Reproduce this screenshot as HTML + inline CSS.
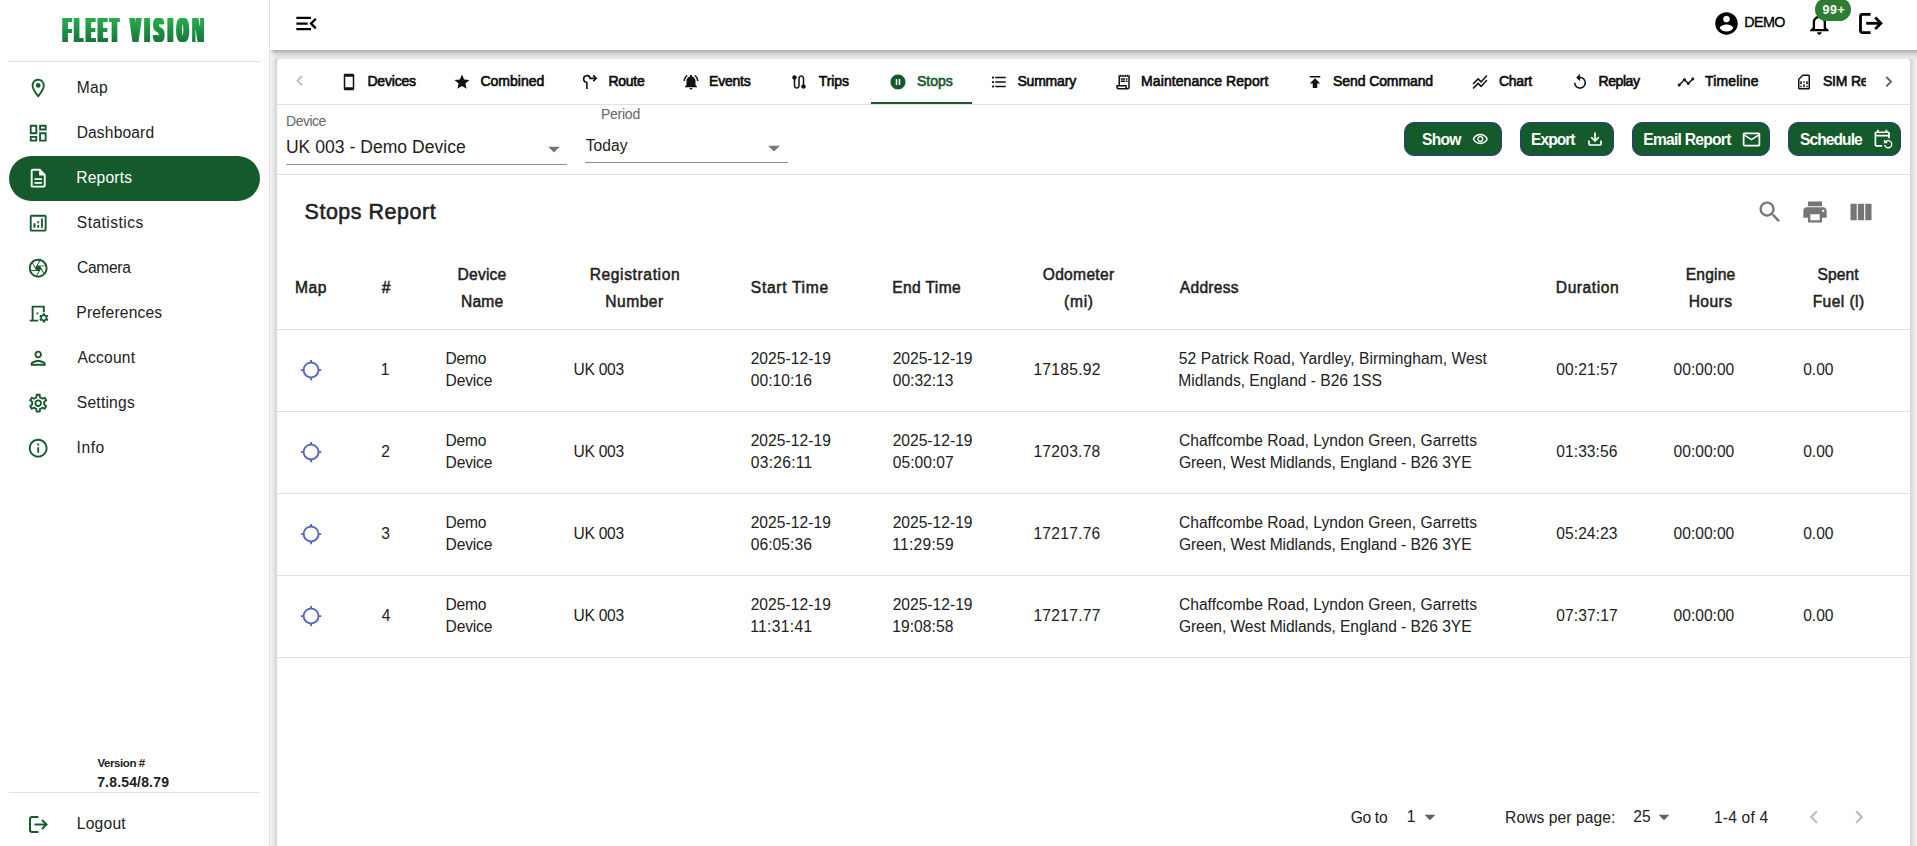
<!DOCTYPE html>
<html lang="en">
<head>
<meta charset="utf-8">
<title>Fleet Vision - Stops Report</title>
<style>
*{box-sizing:border-box;margin:0;padding:0}
html,body{width:1917px;height:846px;overflow:hidden;background:#fff;font-family:"Liberation Sans",sans-serif;color:#212121}
div,span,svg{position:absolute}
svg{display:block;fill:currentColor;overflow:visible}
.t{white-space:pre;line-height:30px}
#side{left:0;top:0;width:270px;height:846px;background:#fff;border-right:1px solid #e0e0e0}
.hr{left:9px;width:251px;height:1px;background:#e0e0e0}
.mi{left:9px;width:251px;height:45px;border-radius:22.5px}
.mi svg{color:#155a2b}
.mi.act{background:#155a2b}
.mi.act svg{color:#fff}
#main{left:270px;top:0;width:1647px;height:846px;background:#fff;overflow:hidden}
#hdr{left:0;top:0;width:1647px;height:50px;background:#fff}
#hdr svg{color:#000}
#gapt{left:0;top:50px;width:1647px;height:9px;background:linear-gradient(to bottom,rgba(0,0,0,.31) .5px,rgba(0,0,0,.255) 1.5px,rgba(0,0,0,.216) 2.5px,rgba(0,0,0,.176) 3.5px,rgba(0,0,0,.145) 4.5px,rgba(0,0,0,.122) 5.5px,rgba(0,0,0,.106) 6.5px,rgba(0,0,0,.098) 7.5px,rgba(0,0,0,.09) 8.5px)}
#gapl{left:0;top:59px;width:7px;height:787px;background:linear-gradient(to right,rgba(0,0,0,.047) .5px,rgba(0,0,0,.063) 1.5px,rgba(0,0,0,.078) 2.5px,rgba(0,0,0,.098) 3.5px,rgba(0,0,0,.114) 4.5px,rgba(0,0,0,.137) 5.5px,rgba(0,0,0,.169) 6.5px)}
#gapr{left:1640px;top:59px;width:7px;height:787px;background:linear-gradient(to left,rgba(0,0,0,.047) .5px,rgba(0,0,0,.063) 1.5px,rgba(0,0,0,.078) 2.5px,rgba(0,0,0,.098) 3.5px,rgba(0,0,0,.114) 4.5px,rgba(0,0,0,.137) 5.5px,rgba(0,0,0,.169) 6.5px)}
#gapc{left:0;top:50px;width:6px;height:9px;background:linear-gradient(to right,rgba(255,255,255,.75) 0,rgba(255,255,255,.45) 2px,rgba(255,255,255,0) 6px)}
#gapk{left:7px;top:59px;width:1633px;height:5px;background:linear-gradient(to right,#dedede 0,#dedede 5px,#fff 5px,#fff 1628px,#dedede 1628px)}
#card{left:7px;top:59px;width:1633px;height:800px;background:#fff;border-radius:4px 4px 0 0}
.ln{left:0;width:1633px;height:1px;background:#e0e0e0}
.tab{top:0;height:44px}
#tabs{left:40px;top:0;width:1548.500px;height:45px;overflow:hidden}
.btn{top:63px;height:34px;border-radius:10px;background:#155a2b;border:1px solid #2a3a8c}
.btn svg{color:#fff}
.row{left:0;width:1633px;height:82px;border-bottom:1px solid #e0e0e0}
#thead{left:0;top:189px;width:1633px;height:82px;border-bottom:1px solid #e0e0e0}
#pager{left:0;top:731px;width:1633px;height:56px}
</style>
</head>
<body>

<div id="side">
<div id="logo" style="left:0;top:0;width:269px;height:60px"><svg width="269" height="60" viewBox="0 0 269 60" style="display:block">
<defs><linearGradient id="lg" gradientUnits="userSpaceOnUse" x1="0" y1="16.0" x2="0" y2="41.9"><stop offset="0" stop-color="#2ab24c"/><stop offset="1" stop-color="#15763a"/></linearGradient>
<filter id="fat2" x="-5%" y="-20%" width="110%" height="140%">
<feOffset dx="-2.1" dy="-0.300" result="a"/><feOffset in="SourceGraphic" dx="-1.05" dy="0.300" result="b"/><feOffset in="SourceGraphic" dx="1.05" dy="-0.300" result="c"/><feOffset in="SourceGraphic" dx="2.1" dy="0.300" result="d"/>
<feMerge><feMergeNode in="a"/><feMergeNode in="b"/><feMergeNode in="SourceGraphic"/><feMergeNode in="c"/><feMergeNode in="d"/></feMerge></filter></defs>
<g filter="url(#fat2)"><text x="63.6" y="41.9" font-family="Liberation Sans, sans-serif" font-weight="bold" font-size="35.0" letter-spacing="14.0" fill="url(#lg)"><tspan textLength="58.9" lengthAdjust="spacingAndGlyphs">FLEET</tspan><tspan textLength="8.5" lengthAdjust="spacingAndGlyphs"> </tspan><tspan textLength="77.2" lengthAdjust="spacingAndGlyphs">VISION</tspan></text></g>
<path fill="#fff" d="M198.300,17H200.100V27.500ZM195.500,42.200H197.600L195.500,28Z"/></svg></div>
<div class="hr" style="top:61px"></div>
<div id="menu">
<div class="mi" style="top:66px"><svg class="i" style="left:18px;top:11px;width:22.4px;height:22.4px;" viewBox="0 0 24 24"><path d="M12 2C8.13 2 5 5.13 5 9c0 5.25 7 13 7 13s7-7.750 7-13c0-3.870-3.130-7-7-7zM7 9c0-2.760 2.240-5 5-5s5 2.240 5 5c0 2.880-2.880 7.190-5 9.880C9.920 16.210 7 11.850 7 9z"/><circle cx="12" cy="9" r="2.500"/></svg><span class="t" style="left:67.65px;top:7px;font-size:15.6px;letter-spacing:0.29px;">Map</span></div>
<div class="mi" style="top:111px"><svg class="i" style="left:18px;top:11px;width:22.4px;height:22.4px;" viewBox="0 0 24 24"><path d="M19 5v2h-4V5h4M9 5v6H5V5h4m10 8v6h-4v-6h4M9 17v2H5v-2h4M21 3h-8v6h8V3zM11 3H3v10h8V3zm10 8h-8v10h8V11zm-10 4H3v6h8v-6z"/></svg><span class="t" style="left:67.65px;top:7px;font-size:15.6px;letter-spacing:0.15px;">Dashboard</span></div>
<div class="mi act" style="top:156px"><svg class="i" style="left:18px;top:11px;width:22.4px;height:22.4px;" viewBox="0 0 24 24"><path d="M8 16h8v2H8zm0-4h8v2H8zm6-10H6c-1.100 0-2 .900-2 2v16c0 1.100.890 2 1.990 2H18c1.100 0 2-.900 2-2V8l-6-6zm4 18H6V4h7v5h5v11z"/></svg><span class="t" style="left:67.35px;top:7px;font-size:15.6px;letter-spacing:0.17px;color:#fff;">Reports</span></div>
<div class="mi" style="top:201px"><svg class="i" style="left:18px;top:11px;width:22.4px;height:22.4px;" viewBox="0 0 24 24"><path d="M19 3H5c-1.100 0-2 .900-2 2v14c0 1.100.900 2 2 2h14c1.100 0 2-.900 2-2V5c0-1.100-.900-2-2-2zm0 16H5V5h14v14z"/><path d="M7 12h2v5H7zm8-5h2v10h-2zm-4 7h2v3h-2zm0-4h2v2h-2z"/></svg><span class="t" style="left:67.87px;top:7px;font-size:15.6px;letter-spacing:0.44px;">Statistics</span></div>
<div class="mi" style="top:246px"><svg class="i" style="left:18px;top:11px;width:22.4px;height:22.4px;" viewBox="0 0 24 24"><path d="M14.250 2.260l-.080-.040-.010.020C13.460 2.090 12.740 2 12 2 6.480 2 2 6.480 2 12s4.480 10 10 10 10-4.480 10-10c0-4.750-3.310-8.720-7.750-9.740zM19.410 9h-7.990l2.710-4.700c2.400.660 4.350 2.420 5.280 4.700zM13.100 4.080L10.270 9l-1.150 2L6.400 6.300C7.840 4.880 9.820 4 12 4c.370 0 .740.030 1.100.080zM5.700 7.090L8.540 12l1.150 2H4.260C4.100 13.360 4 12.690 4 12c0-1.850.640-3.550 1.700-4.910zM4.590 15h7.980l-2.710 4.700c-2.400-.670-4.340-2.420-5.270-4.700zm6.310 4.910L14.890 13l2.720 4.700C16.160 19.120 14.180 20 12 20c-.380 0-.740-.040-1.100-.090zm7.400-3l-4-6.910h5.430c.170.640.270 1.310.270 2 0 1.850-.640 3.550-1.700 4.910z"/></svg><span class="t" style="left:67.91px;top:7px;font-size:15.6px;letter-spacing:-0.29px;">Camera</span></div>
<div class="mi" style="top:291px"><svg class="i" style="left:18px;top:11px;width:22.4px;height:22.4px;" viewBox="0 0 24 24"><path d="M21.690 16.370l1.140-1-1-1.730-1.450.490c-.320-.270-.680-.480-1.080-.630L19 12h-2l-.300 1.490c-.400.150-.760.360-1.080.630l-1.450-.490-1 1.730 1.140 1c-.080.500-.080.760 0 1.260l-1.140 1 1 1.730 1.450-.490c.320.270.680.480 1.080.630L17 22h2l.300-1.490c.400-.150.760-.360 1.080-.630l1.450.490 1-1.730-1.140-1c.080-.510.080-.770 0-1.270zM18 19c-1.100 0-2-.900-2-2s.900-2 2-2 2 .900 2 2-.900 2-2 2zM19 4v7h-2V6H7v13h5v2H3v-2h2V4h14zM12.200 13.200h-2v-2h2z"/></svg><span class="t" style="left:67.35px;top:7px;font-size:15.6px;letter-spacing:0.17px;">Preferences</span></div>
<div class="mi" style="top:336px"><svg class="i" style="left:18px;top:11px;width:22.4px;height:22.4px;" viewBox="0 0 24 24"><path d="M12 6c1.100 0 2 .900 2 2s-.900 2-2 2-2-.900-2-2 .900-2 2-2m0 10c2.700 0 5.800 1.290 6 2H6c.230-.720 3.310-2 6-2m0-12C9.790 4 8 5.790 8 8s1.790 4 4 4 4-1.790 4-4-1.790-4-4-4zm0 10c-2.670 0-8 1.340-8 4v2h16v-2c0-2.660-5.330-4-8-4z"/></svg><span class="t" style="left:68.41px;top:7px;font-size:15.6px;letter-spacing:0.22px;">Account</span></div>
<div class="mi" style="top:381px"><svg class="i" style="left:18px;top:11px;width:22.4px;height:22.4px;" viewBox="0 0 24 24"><path d="M19.430 12.980c.040-.320.070-.640.070-.980 0-.340-.030-.660-.070-.980l2.110-1.650c.190-.150.240-.420.120-.640l-2-3.460c-.090-.160-.260-.250-.440-.250-.060 0-.120.010-.170.030l-2.490 1c-.520-.400-1.080-.730-1.690-.980l-.380-2.650C14.460 2.180 14.250 2 14 2h-4c-.250 0-.460.180-.490.420l-.380 2.650c-.610.250-1.170.590-1.690.980l-2.490-1c-.060-.020-.120-.030-.180-.030-.170 0-.340.090-.430.250l-2 3.460c-.130.220-.070.490.120.640l2.110 1.650c-.040.320-.070.650-.070.980 0 .330.030.660.070.980l-2.110 1.650c-.190.150-.240.420-.120.640l2 3.460c.090.160.260.250.440.250.060 0 .120-.010.170-.030l2.490-1c.520.400 1.080.730 1.690.980l.380 2.650c.030.240.240.420.490.420h4c.250 0 .460-.180.490-.420l.380-2.650c.610-.250 1.170-.590 1.690-.980l2.490 1c.060.020.120.030.180.030.170 0 .340-.090.430-.250l2-3.460c.120-.220.070-.490-.120-.640l-2.110-1.650zm-1.980-1.710c.040.310.050.520.050.730 0 .210-.020.430-.050.730l-.140 1.130.890.700 1.080.840-.700 1.210-1.270-.510-1.040-.420-.900.680c-.430.320-.840.560-1.250.730l-1.060.430-.160 1.130-.200 1.350h-1.400l-.190-1.350-.160-1.130-1.060-.430c-.430-.180-.830-.410-1.230-.710l-.910-.700-1.060.430-1.270.510-.700-1.210 1.080-.840.890-.700-.140-1.130c-.030-.310-.050-.540-.050-.740s.020-.430.050-.730l.140-1.130-.890-.700-1.080-.840.700-1.210 1.270.510 1.040.420.900-.680c.430-.320.840-.560 1.250-.730l1.060-.430.160-1.130.200-1.350h1.390l.190 1.350.160 1.130 1.060.430c.430.180.830.410 1.230.710l.910.700 1.060-.430 1.270-.510.700 1.210-1.070.850-.890.700.140 1.130zM12 8c-2.210 0-4 1.790-4 4s1.790 4 4 4 4-1.790 4-4-1.790-4-4-4zm0 6c-1.100 0-2-.900-2-2s.900-2 2-2 2 .900 2 2-.900 2-2 2z"/></svg><span class="t" style="left:67.87px;top:7px;font-size:15.6px;letter-spacing:0.21px;">Settings</span></div>
<div class="mi" style="top:426px"><svg class="i" style="left:18px;top:11px;width:22.4px;height:22.4px;" viewBox="0 0 24 24"><path d="M11 7h2v2h-2zm0 4h2v6h-2zm1-9C6.480 2 2 6.480 2 12s4.480 10 10 10 10-4.480 10-10S17.520 2 12 2zm0 18c-4.410 0-8-3.590-8-8s3.590-8 8-8 8 3.590 8 8-3.590 8-8 8z"/></svg><span class="t" style="left:67.52px;top:7px;font-size:15.6px;letter-spacing:0.57px;">Info</span></div>
</div>
<span class="t" style="left:97.47px;top:748px;font-size:11.5px;letter-spacing:-0.43px;font-weight:bold;">Version #</span>
<span class="t" style="left:97.17px;top:767px;font-size:14px;letter-spacing:0.17px;font-weight:bold;">7.8.54/8.79</span>
<div class="hr" style="top:792px"></div>
<div class="mi" style="top:802px"><svg class="i" style="left:19.900px;top:13.700px;width:19px;height:17px" viewBox="0 0 19 17"><g fill="none" stroke="#155a2b" stroke-width="2"><path d="M9.400,1H3Q1,1 1,3V14Q1,16 3,16H9.400"/><path d="M5.600,8.500H17"/><path d="M13,4L17.500,8.500L13,13"/></g></svg><span class="t" style="left:67.75px;top:7px;font-size:15.6px;letter-spacing:0.25px;">Logout</span></div>
</div>
<div id="main">
<div id="gapt"></div><div id="gapl"></div><div id="gapr"></div><div id="gapc"></div><div id="gapk"></div>
<div id="hdr">
<svg class="i" style="left:22.7px;top:10.1px;width:27px;height:27px;" viewBox="0 0 24 24"><path d="M3 18h13v-2H3v2zm0-5h10v-2H3v2zm0-7v2h13V6H3zm18 9.590L17.420 12 21 8.410 19.590 7l-5 5 5 5L21 15.590z"/></svg>
<svg class="i" style="left:1443.1px;top:9.7px;width:27px;height:27px;" viewBox="0 0 24 24"><path d="M12 2C6.480 2 2 6.480 2 12s4.480 10 10 10 10-4.480 10-10S17.520 2 12 2zm0 3c1.660 0 3 1.340 3 3s-1.340 3-3 3-3-1.340-3-3 1.340-3 3-3zm0 14.200c-2.500 0-4.710-1.280-6-3.220.030-1.990 4-3.080 6-3.080 1.990 0 5.970 1.090 6 3.080-1.290 1.940-3.500 3.220-6 3.220z"/></svg>
<svg class="i" style="left:0;top:0;width:1647px;height:50px" viewBox="270 0 1647 50"><path fill-rule="evenodd" d="M1810.05,31.3V30.3L1812.7,27.5V22.3C1812.7,18.5 1815.75,15.7 1819.35,15.7C1822.95,15.7 1826,18.5 1826,22.3V27.5L1828.65,30.3V31.3ZM1815.05,29V22.3C1815.05,19.8 1816.95,18.1 1819.35,18.1C1821.75,18.1 1823.65,19.8 1823.65,22.3V29ZM1817.15,32.3H1821.55C1821.55,33.6 1820.55,34.8 1819.35,34.8C1818.15,34.8 1817.15,33.6 1817.15,32.3Z"/><g fill="none" stroke="#000" stroke-width="2.800"><path d="M1870.600,14.400H1862.500Q1860.500,14.400 1860.500,16.400V30.600Q1860.500,32.600 1862.500,32.600H1870.600"/><path d="M1866.200,23.300H1880"/><path d="M1875.200,17.600L1880.900,23.300L1875.200,29"/></g></svg>
<span class="t" style="left:1474.34px;top:7px;font-size:14.3px;letter-spacing:-0.62px;color:#000;-webkit-text-stroke:0.35px;">DEMO</span>
<div id="badge" style="left:1545.300px;top:-2px;width:36px;height:23px;border-radius:11.500px;background:#2e7d32"><span class="t" style="left:7.3px;top:-3px;font-size:12.4px;letter-spacing:0.61px;color:#fff;font-weight:bold;">99+</span></div>
</div>
<div id="card">
<svg class="i" style="left:11.7px;top:11.25px;width:21.4px;height:21.4px;color:#bdbdbd;" viewBox="0 0 24 24"><path d="M15.410 7.410L14 6l-6 6 6 6 1.410-1.410L10.830 12z"/></svg>
<svg class="i" style="left:1600.6px;top:11.55px;width:21.4px;height:21.4px;color:#5a5a5a;" viewBox="0 0 24 24"><path d="M10 6L8.590 7.410 13.170 12l-4.580 4.590L10 18l6-6z"/></svg>
<div id="tabs">
<div class="tab" style="left:4.9px;width:113.1px"><svg class="i" style="left:18px;top:13.75px;width:18px;height:18px;color:#111;" viewBox="0 0 24 24"><path d="M17 1.010L7 1c-1.100 0-1.990.900-1.990 2v18c0 1.100.890 2 1.990 2h10c1.100 0 2-.900 2-2V3c0-1.100-.900-1.990-2-1.990zM17 19H7V5h10v14z"/></svg><span class="t" style="left:45.52px;top:7px;font-size:14px;letter-spacing:-0.19px;color:#0a0a0a;-webkit-text-stroke:0.6px;">Devices</span></div>
<div class="tab" style="left:118px;width:128px"><svg class="i" style="left:18px;top:13.75px;width:18px;height:18px;color:#111;" viewBox="0 0 24 24"><path d="M12 17.270L18.180 21l-1.640-7.030L22 9.240l-7.190-.610L12 2 9.190 8.630 2 9.240l5.460 4.730L5.820 21z"/></svg><span class="t" style="left:45.43px;top:7px;font-size:14px;letter-spacing:0.02px;color:#0a0a0a;-webkit-text-stroke:0.6px;">Combined</span></div>
<div class="tab" style="left:245.7px;width:100.9px"><svg class="i" style="left:17.05px;top:12.06px;width:19.5px;height:19.5px;color:#111;" viewBox="0 0 24 24"><path fill="none" stroke="currentColor" stroke-width="2" d="M8.500 22v-8.200M8.500 13.800a4 4 0 1 1 3.900-4.800H19.500"/><path fill="none" stroke="currentColor" stroke-width="2" d="M16.300 5.400L19.900 9l-3.600 3.600"/></svg><span class="t" style="left:45.72px;top:7px;font-size:14px;letter-spacing:-0.27px;color:#0a0a0a;-webkit-text-stroke:0.6px;">Route</span></div>
<div class="tab" style="left:346.9px;width:105.8px"><svg class="i" style="left:18px;top:13.75px;width:18px;height:18px;color:#111;" viewBox="0 0 24 24"><path d="M7.580 4.080L6.150 2.650C3.750 4.480 2.170 7.300 2.030 10.500h2c.150-2.650 1.510-4.970 3.550-6.420zm12.390 6.420h2c-.150-3.200-1.730-6.020-4.120-7.850l-1.420 1.430c2.020 1.450 3.390 3.770 3.540 6.420zM18 11c0-3.070-1.640-5.640-4.500-6.320V4c0-.830-.670-1.500-1.500-1.500s-1.500.670-1.500 1.500v.680C7.630 5.360 6 7.920 6 11v5l-2 2v1h16v-1l-2-2v-5zm-6 11c.140 0 .270-.010.400-.040.650-.140 1.180-.580 1.440-1.180.100-.240.150-.500.150-.780h-4c.010 1.100.900 2 2.010 2z"/></svg><span class="t" style="left:45.22px;top:7px;font-size:14px;letter-spacing:-0.23px;color:#0a0a0a;-webkit-text-stroke:0.6px;">Events</span></div>
<div class="tab" style="left:455.1px;width:95.7px"><svg class="i" style="left:18px;top:13.75px;width:18px;height:18px;color:#111;" viewBox="0 0 24 24"><path d="M19 15.180V7c0-2.210-1.790-4-4-4s-4 1.790-4 4v10c0 1.100-.900 2-2 2s-2-.900-2-2V8.820C8.160 8.400 9 7.300 9 6c0-1.660-1.340-3-3-3S3 4.340 3 6c0 1.300.840 2.400 2 2.820V17c0 2.210 1.790 4 4 4s4-1.790 4-4V7c0-1.100.900-2 2-2s2 .900 2 2v8.180c-1.160.410-2 1.510-2 2.820 0 1.660 1.340 3 3 3s3-1.340 3-3c0-1.300-.840-2.400-2-2.820z"/></svg><span class="t" style="left:46.68px;top:7px;font-size:14px;letter-spacing:-0.12px;color:#0a0a0a;-webkit-text-stroke:0.6px;">Trips</span></div>
<div class="tab" style="left:554px;width:100.6px"><svg class="i" style="left:18px;top:13.75px;width:18px;height:18px;color:#155a2b;" viewBox="0 0 24 24"><path d="M12 2C6.480 2 2 6.480 2 12s4.480 10 10 10 10-4.480 10-10S17.520 2 12 2zm-1 14H9V8h2v8zm4 0h-2V8h2v8z"/></svg><span class="t" style="left:46.09px;top:7px;font-size:14px;letter-spacing:-0.05px;color:#155a2b;-webkit-text-stroke:0.6px;">Stops</span></div>
<div class="tab" style="left:655.2px;width:123.5px"><svg class="i" style="left:18px;top:13.75px;width:18px;height:18px;color:#111;" viewBox="0 0 24 24"><path d="M4 10.500c-.830 0-1.500.670-1.500 1.500s.670 1.500 1.500 1.500 1.500-.670 1.500-1.500-.670-1.500-1.500-1.500zm0-6c-.830 0-1.500.670-1.500 1.500S3.170 7.500 4 7.500 5.500 6.830 5.500 6 4.830 4.500 4 4.500zm0 12c-.830 0-1.500.680-1.500 1.500s.680 1.500 1.500 1.500 1.500-.680 1.500-1.500-.670-1.500-1.500-1.500zM7 19h14v-2H7v2zm0-6h14v-2H7v2zm0-8v2h14V5H7z"/></svg><span class="t" style="left:45.19px;top:7px;font-size:14px;letter-spacing:-0.18px;color:#0a0a0a;-webkit-text-stroke:0.6px;">Summary</span></div>
<div class="tab" style="left:779px;width:191.8px"><svg class="i" style="left:18px;top:13.75px;width:18px;height:18px;color:#111;" viewBox="0 0 24 24"><path d="M19.500 3.500L18 2l-1.500 1.500L15 2l-1.500 1.500L12 2l-1.500 1.500L9 2 7.500 3.500 6 2v14H3v3c0 1.660 1.340 3 3 3h12c1.660 0 3-1.340 3-3V2l-1.500 1.500zM15 20H6c-.550 0-1-.450-1-1v-1h10v2zm4-1c0 .550-.450 1-1 1s-1-.450-1-1v-3H8V5h11v14z"/><path d="M9 7h6v2H9zm7 0h2v2h-2zm-7 3h6v2H9zm7 0h2v2h-2z"/></svg><span class="t" style="left:45.12px;top:7px;font-size:14px;letter-spacing:0.07px;color:#0a0a0a;-webkit-text-stroke:0.6px;">Maintenance Report</span></div>
<div class="tab" style="left:971.2px;width:163.6px"><svg class="i" style="left:18px;top:13.75px;width:18px;height:18px;color:#111;" viewBox="0 0 24 24"><path d="M5 4v2h14V4H5zm0 10h4v6h6v-6h4l-7-7-7 7z"/></svg><span class="t" style="left:44.89px;top:7px;font-size:14px;letter-spacing:-0.1px;color:#0a0a0a;-webkit-text-stroke:0.6px;">Send Command</span></div>
<div class="tab" style="left:1136px;width:98.5px"><svg class="i" style="left:18px;top:13.75px;width:18px;height:18px;color:#111;" viewBox="0 0 24 24"><path d="M2 19.990l7.500-7.510 4 4 7.090-7.970L22 9.920l-8.500 9.560-4-4-6 6.010-1.500-1.500zm1.500-4.500l6-6.010 4 4L22 3.920l-1.410-1.410-7.090 7.970-4-4L2 13.990l1.500 1.500z"/></svg><span class="t" style="left:46.03px;top:7px;font-size:14px;letter-spacing:-0.27px;color:#0a0a0a;-webkit-text-stroke:0.6px;">Chart</span></div>
<div class="tab" style="left:1236.1px;width:106.1px"><svg class="i" style="left:18px;top:13.75px;width:18px;height:18px;color:#111;" viewBox="0 0 24 24"><path d="M12 5V1L7 6l5 5V7c3.310 0 6 2.690 6 6s-2.690 6-6 6-6-2.690-6-6H4c0 4.420 3.580 8 8 8s8-3.580 8-8-3.580-8-8-8z"/></svg><span class="t" style="left:45.42px;top:7px;font-size:14px;letter-spacing:-0.43px;color:#0a0a0a;-webkit-text-stroke:0.6px;">Replay</span></div>
<div class="tab" style="left:1342px;width:118.4px"><svg class="i" style="left:18px;top:13.75px;width:18px;height:18px;color:#111;" viewBox="0 0 24 24"><path d="M23 8c0 1.100-.900 2-2 2-.180 0-.350-.020-.510-.070l-3.560 3.550c.050.160.070.340.070.520 0 1.100-.900 2-2 2s-2-.900-2-2c0-.180.020-.360.070-.520l-2.550-2.550c-.160.050-.340.070-.520.070s-.360-.020-.520-.070l-4.550 4.560c.050.160.070.330.070.510 0 1.100-.900 2-2 2s-2-.900-2-2 .900-2 2-2c.180 0 .350.020.510.070l4.560-4.550C8.020 9.360 8 9.180 8 9c0-1.100.900-2 2-2s2 .900 2 2c0 .180-.020.360-.070.520l2.550 2.550c.160-.050.340-.070.520-.070s.360.020.520.070l3.550-3.560C19.020 8.350 19 8.180 19 8c0-1.100.900-2 2-2s2 .900 2 2z"/></svg><span class="t" style="left:45.98px;top:7px;font-size:14px;letter-spacing:0.17px;color:#0a0a0a;-webkit-text-stroke:0.6px;">Timeline</span></div>
<div class="tab" style="left:1460.1px;width:141.4px"><svg class="i" style="left:18px;top:13.75px;width:18px;height:18px;color:#111;" viewBox="0 0 24 24"><path d="M18 2h-8L4 8v12c0 1.100.900 2 2 2h12c1.100 0 2-.900 2-2V4c0-1.100-.900-2-2-2zm0 2v16H6V8.830L10.830 4H18z"/><path d="M7 17h2v2H7zm8 0h2v2h-2zm-8-6h2v4H7zm4 4h2v4h-2zm0-4h2v2h-2zm4 0h2v4h-2z"/></svg><span class="t" style="left:45.89px;top:7px;font-size:14px;letter-spacing:-0.2px;color:#0a0a0a;-webkit-text-stroke:0.6px;">SIM Re</span></div>
<div style="left:554px;top:43px;width:101px;height:2px;background:#155a2b"></div>
</div>
<div class="ln" style="top:45px"></div>
<span class="t" style="left:9.05px;top:47px;font-size:14px;letter-spacing:-0.52px;color:#666;">Device</span>
<span class="t" style="left:8.89px;top:73px;font-size:17.55px;letter-spacing:0.03px;">UK 003 - Demo Device</span>
<div style="left:9px;top:105px;width:281px;height:1px;background:#8f8f8f"></div>
<svg class="i" style="left:262.6px;top:75.5px;width:28px;height:28px;color:#757575;" viewBox="0 0 24 24"><path d="M7 10l5 5 5-5z"/></svg>
<span class="t" style="left:323.95px;top:40px;font-size:14px;letter-spacing:-0.24px;color:#666;">Period</span>
<span class="t" style="left:308.71px;top:72px;font-size:15.6px;letter-spacing:0.04px;">Today</span>
<div style="left:308px;top:103px;width:203px;height:1px;background:#8f8f8f"></div>
<svg class="i" style="left:483.45px;top:75.4px;width:28px;height:28px;color:#757575;" viewBox="0 0 24 24"><path d="M7 10l5 5 5-5z"/></svg>
<div class="btn" style="left:1127px;width:98px"><div style="left:-1px;top:-1px"><span class="t" style="left:18.11px;top:3px;font-size:15.6px;letter-spacing:-0.74px;color:#fff;font-weight:bold;">Show</span><svg class="i" style="left:68.3px;top:9px;width:16.7px;height:16.7px;" viewBox="0 0 24 24"><path d="M12 6c3.790 0 7.170 2.130 8.820 5.500C19.170 14.870 15.790 17 12 17s-7.170-2.130-8.820-5.500C4.830 8.130 8.210 6 12 6m0-2C7 4 2.730 7.110 1 11.500 2.730 15.890 7 19 12 19s9.270-3.110 11-7.500C21.270 7.110 17 4 12 4zm0 5c1.380 0 2.500 1.120 2.500 2.500S13.380 14 12 14s-2.500-1.120-2.500-2.500S10.620 9 12 9m0-2c-2.480 0-4.500 2.020-4.500 4.500S9.520 16 12 16s4.500-2.020 4.500-4.500S14.480 7 12 7z"/></svg></div></div>
<div class="btn" style="left:1243px;width:94px"><div style="left:-1px;top:-1px"><span class="t" style="left:11.04px;top:3px;font-size:15.6px;letter-spacing:-0.97px;color:#fff;font-weight:bold;">Export</span><svg class="i" style="left:67px;top:9.45px;width:16px;height:16px;" viewBox="0 0 24 24"><g fill="none" stroke="currentColor" stroke-width="2.500" stroke-linecap="round" stroke-linejoin="round"><path d="M21 15v4a2 2 0 0 1-2 2H5a2 2 0 0 1-2-2v-4"/><path d="M7 10l5 5 5-5"/><path d="M12 15V3"/></g></svg></div></div>
<div class="btn" style="left:1355px;width:138px"><div style="left:-1px;top:-1px"><span class="t" style="left:11.24px;top:3px;font-size:15.6px;letter-spacing:-0.73px;color:#fff;font-weight:bold;">Email Report</span><svg class="i" style="left:108.65px;top:6.7px;width:21px;height:21px;" viewBox="0 0 24 24"><path d="M20 4H4c-1.100 0-1.990.900-1.990 2L2 18c0 1.100.900 2 2 2h16c1.100 0 2-.900 2-2V6c0-1.100-.900-2-2-2zm0 14H4V8l8 5 8-5v10zm-8-7L4 6h16l-8 5z"/></svg></div></div>
<div class="btn" style="left:1511px;width:113px"><div style="left:-1px;top:-1px"><span class="t" style="left:11.91px;top:3px;font-size:15.6px;letter-spacing:-0.92px;color:#fff;font-weight:bold;">Schedule</span><svg class="i" style="left:83.55px;top:6.4px;width:20.4px;height:20.4px;" viewBox="0 0 24 24"><path d="M21 12V6c0-1.100-.900-2-2-2h-1V2h-2v2H8V2H6v2H5c-1.100 0-2 .900-2 2v14c0 1.100.900 2 2 2h7v-2H5V10h14v2h2zm-2-4H5V6h14v2zm-3.360 12c.430 1.450 1.770 2.500 3.360 2.500 1.930 0 3.500-1.570 3.500-3.500s-1.570-3.500-3.500-3.500c-.950 0-1.820.380-2.450 1H18V18h-4v-4h1.500v1.430c.900-.880 2.140-1.430 3.500-1.430 2.760 0 5 2.240 5 5s-2.240 5-5 5c-2.420 0-4.440-1.720-4.900-4h1.540z"/></svg></div></div>
<div class="ln" style="top:115px"></div>
<span class="t" style="left:27.57px;top:138px;font-size:21.45px;letter-spacing:0.54px;-webkit-text-stroke:0.55px;">Stops Report</span>
<svg class="i" style="left:1479.3px;top:138.8px;width:28px;height:28px;color:#757575;" viewBox="0 0 24 24"><path d="M15.500 14h-.790l-.280-.270C15.410 12.590 16 11.110 16 9.500 16 5.910 13.090 3 9.500 3S3 5.910 3 9.500 5.910 16 9.500 16c1.610 0 3.090-.590 4.230-1.570l.270.280v.790l5 4.990L20.490 19l-4.990-5zm-6 0C7.010 14 5 11.990 5 9.500S7.010 5 9.500 5 14 7.010 14 9.500 11.990 14 9.500 14z"/></svg>
<svg class="i" style="left:1524.4px;top:138.8px;width:28px;height:28px;color:#757575;" viewBox="0 0 24 24"><path d="M19 8H5c-1.660 0-3 1.340-3 3v6h4v4h12v-4h4v-6c0-1.660-1.340-3-3-3zm-3 11H8v-5h8v5zm3-7c-.550 0-1-.450-1-1s.450-1 1-1 1 .450 1 1-.450 1-1 1zm-1-9H6v4h12V3z"/></svg>
<svg class="i" style="left:1569.5px;top:138.8px;width:28px;height:28px;color:#757575;" viewBox="0 0 24 24"><path d="M14.670 5v14H9.330V5h5.340zm1 14H21V5h-5.330v14zm-7.340 0V5H3v14h5.330z"/></svg>
<div id="thead"><span class="t" style="left:18.04px;top:25px;font-size:15.6px;letter-spacing:0.48px;-webkit-text-stroke:0.5px;">Map</span>
<span class="t" style="left:104.86px;top:25px;font-size:15.6px;letter-spacing:-1.3px;-webkit-text-stroke:0.5px;">#</span>
<span class="t" style="left:180.53px;top:12px;font-size:15.6px;letter-spacing:0.22px;-webkit-text-stroke:0.5px;">Device</span>
<span class="t" style="left:184.04px;top:39px;font-size:15.6px;letter-spacing:0.17px;-webkit-text-stroke:0.5px;">Name</span>
<span class="t" style="left:312.63px;top:12px;font-size:15.6px;letter-spacing:0.62px;-webkit-text-stroke:0.5px;">Registration</span>
<span class="t" style="left:328.34px;top:39px;font-size:15.6px;letter-spacing:0.48px;-webkit-text-stroke:0.5px;">Number</span>
<span class="t" style="left:473.79px;top:25px;font-size:15.6px;letter-spacing:0.7px;-webkit-text-stroke:0.5px;">Start Time</span>
<span class="t" style="left:615.23px;top:25px;font-size:15.6px;letter-spacing:0.37px;-webkit-text-stroke:0.5px;">End Time</span>
<span class="t" style="left:765.69px;top:12px;font-size:15.6px;letter-spacing:0.31px;-webkit-text-stroke:0.5px;">Odometer</span>
<span class="t" style="left:787.1px;top:39px;font-size:15.6px;letter-spacing:0.71px;-webkit-text-stroke:0.5px;">(mi)</span>
<span class="t" style="left:902.87px;top:25px;font-size:15.6px;letter-spacing:0.24px;-webkit-text-stroke:0.5px;">Address</span>
<span class="t" style="left:1278.83px;top:25px;font-size:15.6px;letter-spacing:0.54px;-webkit-text-stroke:0.5px;">Duration</span>
<span class="t" style="left:1408.73px;top:12px;font-size:15.6px;letter-spacing:0.2px;-webkit-text-stroke:0.5px;">Engine</span>
<span class="t" style="left:1411.63px;top:39px;font-size:15.6px;letter-spacing:0.43px;-webkit-text-stroke:0.5px;">Hours</span>
<span class="t" style="left:1540.39px;top:12px;font-size:15.6px;letter-spacing:0.14px;-webkit-text-stroke:0.5px;">Spent</span>
<span class="t" style="left:1535.63px;top:39px;font-size:15.6px;letter-spacing:0.43px;-webkit-text-stroke:0.5px;">Fuel (l)</span></div>
<div class="row" style="top:271px"><svg class="i" style="left:23.3px;top:29.3px;width:22.2px;height:22.2px;color:#5666bd;" viewBox="0 0 24 24"><path d="M20.940 11c-.460-4.170-3.770-7.480-7.940-7.940V1h-2v2.060C6.830 3.520 3.520 6.830 3.060 11H1v2h2.060c.460 4.170 3.770 7.480 7.940 7.940V23h2v-2.060c4.170-.460 7.480-3.770 7.940-7.940H23v-2h-2.060zM12 19c-3.870 0-7-3.130-7-7s3.130-7 7-7 7 3.130 7 7-3.130 7-7 7z"/></svg><span class="t" style="left:103.83px;top:25px;font-size:15.6px;">1</span>
<span class="t" style="left:168.55px;top:14px;font-size:15.6px;letter-spacing:-0.24px;">Demo</span>
<span class="t" style="left:168.55px;top:36px;font-size:15.6px;letter-spacing:-0.16px;">Device</span>
<span class="t" style="left:296.61px;top:25px;font-size:15.6px;letter-spacing:-0.31px;">UK 003</span>
<span class="t" style="left:473.64px;top:14px;font-size:15.6px;letter-spacing:0.07px;">2025-12-19</span>
<span class="t" style="left:473.74px;top:36px;font-size:15.6px;letter-spacing:0.07px;">00:10:16</span>
<span class="t" style="left:615.64px;top:14px;font-size:15.6px;letter-spacing:0.01px;">2025-12-19</span>
<span class="t" style="left:615.74px;top:36px;font-size:15.6px;">00:32:13</span>
<span class="t" style="left:756.43px;top:25px;font-size:15.6px;letter-spacing:0.27px;">17185.92</span>
<span class="t" style="left:901.84px;top:14px;font-size:15.6px;letter-spacing:0.06px;">52 Patrick Road, Yardley, Birmingham, West</span>
<span class="t" style="left:901.35px;top:36px;font-size:15.6px;letter-spacing:-0.01px;">Midlands, England - B26 1SS</span>
<span class="t" style="left:1279.34px;top:25px;font-size:15.6px;letter-spacing:0.09px;">00:21:57</span>
<span class="t" style="left:1396.54px;top:25px;font-size:15.6px;letter-spacing:0px;">00:00:00</span>
<span class="t" style="left:1526.14px;top:25px;font-size:15.6px;letter-spacing:0.02px;">0.00</span></div>
<div class="row" style="top:353px"><svg class="i" style="left:23.3px;top:29.3px;width:22.2px;height:22.2px;color:#5666bd;" viewBox="0 0 24 24"><path d="M20.940 11c-.460-4.170-3.770-7.480-7.940-7.940V1h-2v2.060C6.830 3.520 3.520 6.830 3.060 11H1v2h2.060c.460 4.170 3.770 7.480 7.940 7.940V23h2v-2.060c4.170-.460 7.480-3.770 7.940-7.940H23v-2h-2.060zM12 19c-3.870 0-7-3.130-7-7s3.130-7 7-7 7 3.130 7 7-3.130 7-7 7z"/></svg><span class="t" style="left:104.34px;top:25px;font-size:15.6px;">2</span>
<span class="t" style="left:168.55px;top:14px;font-size:15.6px;letter-spacing:-0.24px;">Demo</span>
<span class="t" style="left:168.55px;top:36px;font-size:15.6px;letter-spacing:-0.16px;">Device</span>
<span class="t" style="left:296.61px;top:25px;font-size:15.6px;letter-spacing:-0.31px;">UK 003</span>
<span class="t" style="left:473.64px;top:14px;font-size:15.6px;letter-spacing:0.07px;">2025-12-19</span>
<span class="t" style="left:473.74px;top:36px;font-size:15.6px;letter-spacing:0.28px;">03:26:11</span>
<span class="t" style="left:615.64px;top:14px;font-size:15.6px;letter-spacing:0.01px;">2025-12-19</span>
<span class="t" style="left:615.74px;top:36px;font-size:15.6px;letter-spacing:0.04px;">05:00:07</span>
<span class="t" style="left:756.43px;top:25px;font-size:15.6px;letter-spacing:0.26px;">17203.78</span>
<span class="t" style="left:901.91px;top:14px;font-size:15.6px;letter-spacing:0.02px;">Chaffcombe Road, Lyndon Green, Garretts</span>
<span class="t" style="left:901.93px;top:36px;font-size:15.6px;letter-spacing:-0.07px;">Green, West Midlands, England - B26 3YE</span>
<span class="t" style="left:1279.34px;top:25px;font-size:15.6px;letter-spacing:0.04px;">01:33:56</span>
<span class="t" style="left:1396.54px;top:25px;font-size:15.6px;letter-spacing:0px;">00:00:00</span>
<span class="t" style="left:1526.14px;top:25px;font-size:15.6px;letter-spacing:0.02px;">0.00</span></div>
<div class="row" style="top:435px"><svg class="i" style="left:23.3px;top:29.3px;width:22.2px;height:22.2px;color:#5666bd;" viewBox="0 0 24 24"><path d="M20.940 11c-.460-4.170-3.770-7.480-7.940-7.940V1h-2v2.060C6.830 3.520 3.520 6.830 3.060 11H1v2h2.060c.460 4.170 3.770 7.480 7.940 7.940V23h2v-2.060c4.170-.460 7.480-3.770 7.940-7.940H23v-2h-2.060zM12 19c-3.870 0-7-3.130-7-7s3.130-7 7-7 7 3.130 7 7-3.130 7-7 7z"/></svg><span class="t" style="left:104.33px;top:25px;font-size:15.6px;">3</span>
<span class="t" style="left:168.55px;top:14px;font-size:15.6px;letter-spacing:-0.24px;">Demo</span>
<span class="t" style="left:168.55px;top:36px;font-size:15.6px;letter-spacing:-0.16px;">Device</span>
<span class="t" style="left:296.61px;top:25px;font-size:15.6px;letter-spacing:-0.31px;">UK 003</span>
<span class="t" style="left:473.64px;top:14px;font-size:15.6px;letter-spacing:0.07px;">2025-12-19</span>
<span class="t" style="left:473.74px;top:36px;font-size:15.6px;letter-spacing:0.07px;">06:05:36</span>
<span class="t" style="left:615.64px;top:14px;font-size:15.6px;letter-spacing:0.01px;">2025-12-19</span>
<span class="t" style="left:615.13px;top:36px;font-size:15.6px;letter-spacing:0.29px;">11:29:59</span>
<span class="t" style="left:756.43px;top:25px;font-size:15.6px;letter-spacing:0.26px;">17217.76</span>
<span class="t" style="left:901.91px;top:14px;font-size:15.6px;letter-spacing:0.02px;">Chaffcombe Road, Lyndon Green, Garretts</span>
<span class="t" style="left:901.93px;top:36px;font-size:15.6px;letter-spacing:-0.07px;">Green, West Midlands, England - B26 3YE</span>
<span class="t" style="left:1279.34px;top:25px;font-size:15.6px;letter-spacing:0.04px;">05:24:23</span>
<span class="t" style="left:1396.54px;top:25px;font-size:15.6px;letter-spacing:0px;">00:00:00</span>
<span class="t" style="left:1526.14px;top:25px;font-size:15.6px;letter-spacing:0.02px;">0.00</span></div>
<div class="row" style="top:517px"><svg class="i" style="left:23.3px;top:29.3px;width:22.2px;height:22.2px;color:#5666bd;" viewBox="0 0 24 24"><path d="M20.940 11c-.460-4.170-3.770-7.480-7.940-7.940V1h-2v2.060C6.830 3.520 3.520 6.830 3.060 11H1v2h2.060c.460 4.170 3.770 7.480 7.940 7.940V23h2v-2.060c4.170-.460 7.480-3.770 7.940-7.940H23v-2h-2.060zM12 19c-3.870 0-7-3.130-7-7s3.130-7 7-7 7 3.130 7 7-3.130 7-7 7z"/></svg><span class="t" style="left:104.69px;top:25px;font-size:15.6px;">4</span>
<span class="t" style="left:168.55px;top:14px;font-size:15.6px;letter-spacing:-0.24px;">Demo</span>
<span class="t" style="left:168.55px;top:36px;font-size:15.6px;letter-spacing:-0.16px;">Device</span>
<span class="t" style="left:296.61px;top:25px;font-size:15.6px;letter-spacing:-0.31px;">UK 003</span>
<span class="t" style="left:473.64px;top:14px;font-size:15.6px;letter-spacing:0.07px;">2025-12-19</span>
<span class="t" style="left:473.13px;top:36px;font-size:15.6px;letter-spacing:0.36px;">11:31:41</span>
<span class="t" style="left:615.64px;top:14px;font-size:15.6px;letter-spacing:0.01px;">2025-12-19</span>
<span class="t" style="left:615.13px;top:36px;font-size:15.6px;letter-spacing:0.09px;">19:08:58</span>
<span class="t" style="left:756.43px;top:25px;font-size:15.6px;letter-spacing:0.27px;">17217.77</span>
<span class="t" style="left:901.91px;top:14px;font-size:15.6px;letter-spacing:0.02px;">Chaffcombe Road, Lyndon Green, Garretts</span>
<span class="t" style="left:901.93px;top:36px;font-size:15.6px;letter-spacing:-0.07px;">Green, West Midlands, England - B26 3YE</span>
<span class="t" style="left:1279.34px;top:25px;font-size:15.6px;letter-spacing:0.09px;">07:37:17</span>
<span class="t" style="left:1396.54px;top:25px;font-size:15.6px;letter-spacing:0px;">00:00:00</span>
<span class="t" style="left:1526.14px;top:25px;font-size:15.6px;letter-spacing:0.02px;">0.00</span></div>
<div id="pager"><span class="t" style="left:1073.63px;top:13px;font-size:15.6px;letter-spacing:-0.3px;">Go to</span>
<span class="t" style="left:1129.83px;top:12px;font-size:15.6px;">1</span>
<svg class="i" style="left:1139.5px;top:14.46px;width:26px;height:26px;color:#616161;" viewBox="0 0 24 24"><path d="M7 10l5 5 5-5z"/></svg><span class="t" style="left:1228.05px;top:13px;font-size:15.6px;letter-spacing:0.08px;">Rows per page:</span>
<span class="t" style="left:1356.24px;top:12px;font-size:15.6px;">25</span>
<svg class="i" style="left:1374px;top:14.46px;width:26px;height:26px;color:#616161;" viewBox="0 0 24 24"><path d="M7 10l5 5 5-5z"/></svg><span class="t" style="left:1436.93px;top:13px;font-size:15.6px;letter-spacing:0.2px;">1-4 of 4</span>
<svg class="i" style="left:1523.7px;top:14.25px;width:26px;height:26px;color:#bdbdbd;" viewBox="0 0 24 24"><path d="M15.410 7.410L14 6l-6 6 6 6 1.410-1.410L10.830 12z"/></svg><svg class="i" style="left:1568.6px;top:14.25px;width:26px;height:26px;color:#bdbdbd;" viewBox="0 0 24 24"><path d="M10 6L8.590 7.410 13.170 12l-4.580 4.590L10 18l6-6z"/></svg></div>
</div>
</div>
</body>
</html>
